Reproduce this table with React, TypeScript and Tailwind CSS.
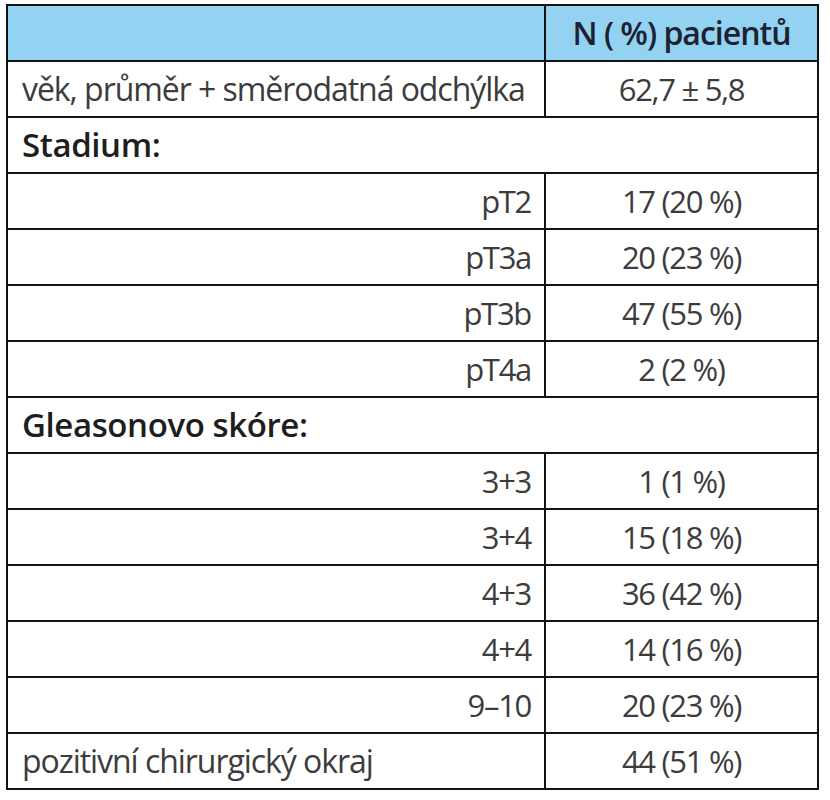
import React from 'react';

type Row =
  | { kind: 'plain'; label: string; value: string }
  | { kind: 'section'; label: string }
  | { kind: 'sub'; label: string; value: string };

const rows: Row[] = [
  { kind: 'plain', label: 'věk, průměr + směrodatná odchýlka', value: '62,7 ± 5,8' },
  { kind: 'section', label: 'Stadium:' },
  { kind: 'sub', label: 'pT2', value: '17 (20 %)' },
  { kind: 'sub', label: 'pT3a', value: '20 (23 %)' },
  { kind: 'sub', label: 'pT3b', value: '47 (55 %)' },
  { kind: 'sub', label: 'pT4a', value: '2 (2 %)' },
  { kind: 'section', label: 'Gleasonovo skóre:' },
  { kind: 'sub', label: '3+3', value: '1 (1 %)' },
  { kind: 'sub', label: '3+4', value: '15 (18 %)' },
  { kind: 'sub', label: '4+3', value: '36 (42 %)' },
  { kind: 'sub', label: '4+4', value: '14 (16 %)' },
  { kind: 'sub', label: '9–10', value: '20 (23 %)' },
  { kind: 'plain', label: 'pozitivní chirurgický okraj', value: '44 (51 %)' },
];

const cell = 'h-[56px] border-2 border-[#111] align-middle';

export default function App() {
  return (
    <div className="w-[830px] h-[800px] bg-white pt-[4px] pl-[6px] font-['Open_Sans',sans-serif] text-[31px] text-[#3c3c3c]">
      <table className="w-[811px] border-collapse table-fixed">
        <colgroup>
          <col className="w-[538px]" />
          <col className="w-[273px]" />
        </colgroup>
        <thead>
          <tr>
            <th className={`${cell} bg-[#94d2f2]`} />
            <th className={`${cell} bg-[#94d2f2] text-center font-semibold text-[#1c2230] text-[32px] tracking-[-1px]`}>
              N ( %) pacientů
            </th>
          </tr>
        </thead>
        <tbody>
          {rows.map((r, i) => {
            if (r.kind === 'section') {
              return (
                <tr key={i}>
                  <td colSpan={2} className={`${cell} pl-[14px] text-[33px] font-semibold text-[#1e1e1e] tracking-[-0.4px]`}>
                    {r.label}
                  </td>
                </tr>
              );
            }
            return (
              <tr key={i}>
                <td
                  className={`${cell} ${
                    r.kind === 'sub'
                      ? 'text-right pr-[13px] tracking-[-1.3px]'
                      : 'text-left pl-[14px] text-[32px] tracking-[-1.05px]'
                  }`}
                >
                  {r.label}
                </td>
                <td className={`${cell} text-center tracking-[-1.3px]`}>{r.value}</td>
              </tr>
            );
          })}
        </tbody>
      </table>
    </div>
  );
}
